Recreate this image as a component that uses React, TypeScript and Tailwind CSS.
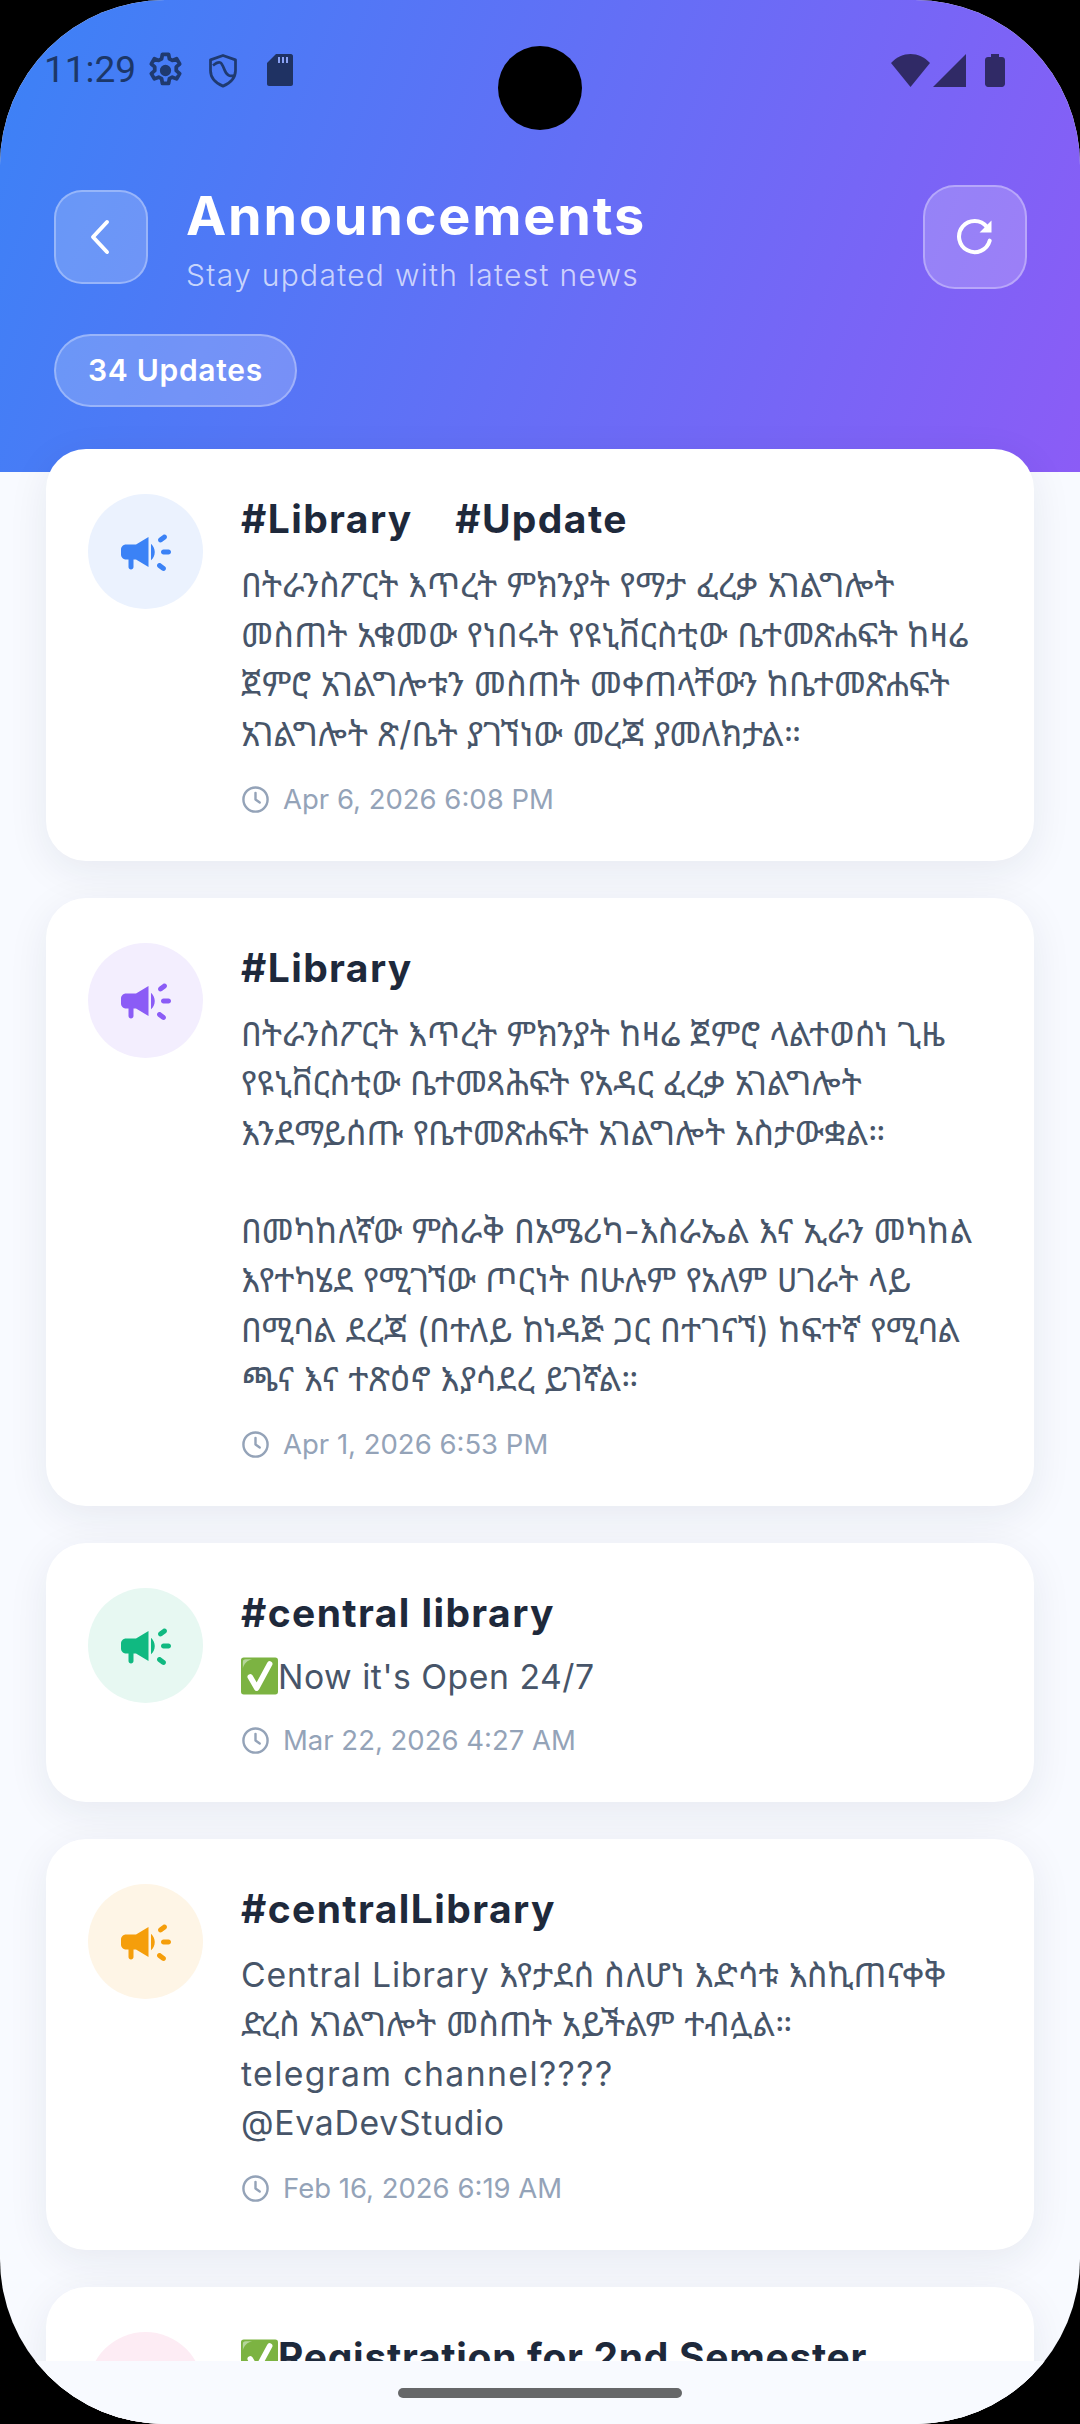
const FONT = "font-['Inter','Noto_Sans_Ethiopic','Noto_Sans',sans-serif]";

function Campaign({ className }: { className: string }) {
  return (
    <svg viewBox="0 0 24 24" fill="currentColor" className={className}>
      <path d="M18 12c0 .55.45 1 1 1h2c.55 0 1-.45 1-1s-.45-1-1-1h-2c-.55 0-1 .45-1 1zm-1.41 4.820c-.33.44-.24 1.050.2 1.370.53.39 1.090.81 1.620 1.210.44.33 1.060.24 1.380-.2.33-.44.24-1.060-.2-1.380-.53-.4-1.090-.82-1.620-1.200-.44-.33-1.050-.24-1.380.2zM20.200 5.380c-.33-.44-.95-.53-1.380-.2-.53.4-1.100.82-1.620 1.220-.44.33-.52.94-.2 1.380.33.44.94.53 1.380.2.53-.39 1.090-.82 1.620-1.220.44-.32.53-.94.2-1.380zM8 9H4c-1.100 0-2 .9-2 2v2c0 1.100.9 2 2 2h1v3c0 .55.45 1 1 1s1-.45 1-1v-3h1l5 3V6L8 9zm7.500 3c0-1.330-.58-2.530-1.500-3.350v6.690c.92-.81 1.500-2.010 1.500-3.340z" />
    </svg>
  );
}

function Clock() {
  return (
    <svg viewBox="0 0 24 24" fill="none" stroke="#94a3b8" strokeWidth="2" strokeLinecap="round" strokeLinejoin="round" className="w-[29px] h-[29px] shrink-0">
      <circle cx="12" cy="12" r="10" />
      <path d="M12 6.500V12l3.500 2.500" />
    </svg>
  );
}

function Check() {
  return (
    <svg viewBox="0 0 40 40" className="inline-block w-[37px] h-[40px] align-[-7px]">
      <rect x="0" y="0" width="40" height="40" rx="3" fill="#7cb342" />
      <path d="M2 12V5c0-2 1-3 3-3h7C7 3 3 7 2 12z" fill="#b5d69a" />
      <path d="M10 21l7 12L31 7" fill="none" stroke="#fff" strokeWidth="6" strokeLinecap="round" strokeLinejoin="round" />
    </svg>
  );
}

type CardProps = {
  tone: string;
  iconTone: string;
  title: React.ReactNode;
  body: React.ReactNode;
  date: string;
  bodyLeading?: string;
};

function Card({ tone, iconTone, title, body, date, bodyLeading = "leading-[49.250px]" }: CardProps) {
  return (
    <div className="bg-white rounded-[40px] pl-[42px] pr-[30px] pt-[42px] pb-[42px] flex gap-[38px] shadow-[0_10px_40px_rgba(30,41,59,0.08)]">
      <div className={`mt-[3px] w-[115px] h-[115px] rounded-full flex items-center justify-center shrink-0 ${tone}`}>
        <Campaign className={`w-[60px] h-[60px] ${iconTone}`} />
      </div>
      <div className="flex-1 min-w-0">
        <div className="text-[39px] leading-[56px] font-bold tracking-[1.400px] text-[#1e293b] whitespace-pre-wrap">{title}</div>
        <div className={`mt-[13px] text-[33.750px] text-[#475569] whitespace-pre-wrap ${bodyLeading}`}>{body}</div>
        <div className="mt-[21px] flex items-center gap-[13px] text-[27.500px] leading-[40px] text-[#94a3b8]">
          <Clock />
          <span>{date}</span>
        </div>
      </div>
    </div>
  );
}

export default function App() {
  return (
    <div className="w-[1080px] h-[2424px] bg-black overflow-hidden">
      <div className={`relative w-full h-full rounded-[165px] overflow-hidden bg-[#f8faff] ${FONT}`}>
        <div className="h-[472px] bg-[linear-gradient(110deg,#3b82f6,#8b5cf6)] flex flex-col">
          <div className="h-[140px] pl-[44px] pr-[75px] pt-[46px] flex justify-between items-start">
            <div className="flex items-center">
              <span className="text-[37px] leading-[48px] font-['Roboto',sans-serif] text-[#1c3768]">11:29</span>
              <svg viewBox="0 0 24 24" fill="none" stroke="#1f3a70" strokeWidth="2.200" className="ml-[9px] w-[41px] h-[41px]">
                <circle cx="12" cy="12" r="2.200" fill="#1f3a70" />
                <path d="M10.200 2.500h3.600l.5 2.700 1.700.9 2.500-1 1.800 3.100-2 1.700v2.200l2 1.700-1.800 3.100-2.500-1-1.700.9-.5 2.700h-3.600l-.5-2.700-1.700-.9-2.500 1-1.800-3.100 2-1.700V9.900l-2-1.700 1.800-3.100 2.500 1 1.700-.9z" strokeLinejoin="round" />
              </svg>
              <svg viewBox="0 0 24 28" fill="none" stroke="#1f3a70" strokeWidth="2.200" className="ml-[22px] w-[30px] h-[35px]">
                <path d="M12 2l10 3.500v8.500c0 5.500-4 10-10 12.500C6 24 2 19.500 2 14V5.500z" strokeLinejoin="round" />
                <path d="M4 10c6-5 7-2 9 3s4 6 8 5" />
              </svg>
              <svg viewBox="0 0 26 32" fill="#1f3263" className="ml-[29px] w-[26px] h-[32px]">
                <path d="M9 0h15c1 0 2 1 2 2v28c0 1-1 2-2 2H2c-1 0-2-1-2-2V9z" />
                <path d="M11 3h2v6h-2zM15 3h2v6h-2zM19 3h2v6h-2z" fill="#8aa2f5" />
              </svg>
            </div>
            <div className="flex items-center pt-[8px]">
              <svg viewBox="0 0 39 33" className="w-[39px] h-[33px]"><path d="M0 9C11-3 28-3 39 9L19.500 33z" fill="#302a66" /></svg>
              <svg viewBox="0 0 33 33" className="ml-[3px] w-[33px] h-[33px]"><path d="M33 0v33H0z" fill="#302a66" /></svg>
              <svg viewBox="0 0 20 33" className="ml-[19px] w-[20px] h-[33px]"><path d="M6 0h8v3h3c1.500 0 3 1.200 3 3v24c0 1.500-1.500 3-3 3H3c-1.500 0-3-1.500-3-3V6c0-1.800 1.500-3 3-3h3z" fill="#302a66" /></svg>
            </div>
          </div>
          <div className="mt-[45px] pl-[54px] pr-[53px] flex items-center gap-[38px]">
            <div className="w-[94px] h-[94px] rounded-[28px] bg-white/20 border-2 border-white/30 flex items-center justify-center">
              <svg viewBox="0 0 24 24" fill="none" stroke="#fff" strokeWidth="2" strokeLinecap="round" strokeLinejoin="round" className="w-[48px] h-[48px]"><path d="M15 4.500 8 12l7 7.500" /></svg>
            </div>
            <div className="flex-1">
              <div className="text-[54px] leading-[62px] font-bold tracking-[1.800px] text-white">Announcements</div>
              <div className="mt-[14px] text-[30px] leading-[28px] tracking-[1.300px] font-light text-white/70">Stay updated with latest news</div>
            </div>
            <div className="w-[104px] h-[104px] rounded-[32px] bg-white/20 border-2 border-white/30 flex items-center justify-center">
              <svg viewBox="0 0 24 24" fill="none" stroke="#fff" strokeWidth="2.200" strokeLinecap="round" className="w-[44px] h-[44px]">
                <path d="M20 14a8.500 8.500 0 1 1-1.500-7.500" />
                <path d="M21 3v6.500h-6.500z" fill="#fff" stroke="none" />
              </svg>
            </div>
          </div>
          <div className="mt-[45px] ml-[54px] self-start h-[73px] px-[32px] rounded-full bg-white/20 border-2 border-white/30 flex items-center text-[30px] font-semibold tracking-[0.700px] text-white">34 Updates</div>
        </div>

        <div className="absolute left-[46px] right-[46px] top-[449px] flex flex-col gap-[37px]">
          <Card
            tone="bg-[#ebf2fe]"
            iconTone="text-[#3b82f6]"
            title="#Library    #Update"
            bodyLeading="leading-[49.500px]"
            body={"በትራንስፖርት እጥረት ምክንያት የማታ ፈረቃ አገልግሎት\nመስጠት አቁመው የነበሩት የዩኒቨርስቲው ቤተመጽሐፍት ከዛሬ\nጀምሮ አገልግሎቱን መስጠት መቀጠላቸውን ከቤተመጽሐፍት\nአገልግሎት ጽ/ቤት ያገኘነው መረጃ ያመለክታል።"}
            date="Apr 6, 2026 6:08 PM"
          />
          <Card
            tone="bg-[#f3eefe]"
            iconTone="text-[#8b5cf6]"
            title="#Library"
            body={"በትራንስፖርት እጥረት ምክንያት ከዛሬ ጀምሮ ላልተወሰነ ጊዜ\nየዩኒቨርስቲው ቤተመጻሕፍት የአዳር ፈረቃ አገልግሎት\nእንደማይሰጡ የቤተመጽሐፍት አገልግሎት አስታውቋል።\n\nበመካከለኛው ምስራቅ በአሜሪካ-እስራኤል እና ኢራን መካከል\nእየተካሄደ የሚገኘው ጦርነት በሁሉም የአለም ሀገራት ላይ\nበሚባል ደረጃ (በተለይ ከነዳጅ ጋር በተገናኘ) ከፍተኛ የሚባል\nጫና እና ተጽዕኖ እያሳደረ ይገኛል።"}
            date="Apr 1, 2026 6:53 PM"
          />
          <Card
            tone="bg-[#e7f8f2]"
            iconTone="text-[#10b981]"
            title="#central library"
            bodyLeading="leading-[45px]"
            body={<><Check /><span className="tracking-[0.500px]">Now it's Open 24/7</span></>}
            date="Mar 22, 2026 4:27 AM"
          />
          <Card
            tone="bg-[#fef5e6]"
            iconTone="text-[#f59e0b]"
            title="#centralLibrary"
            body={<><span className="tracking-[0.800px]">Central Library</span>{" እየታደሰ ስለሆነ እድሳቱ እስኪጠናቀቅ\nድረስ አገልግሎት መስጠት አይችልም ተብሏል።\n"}<span className="tracking-[1.400px]">telegram channel????</span>{"\n"}<span className="tracking-[0.700px]">@EvaDevStudio</span></>}
            date="Feb 16, 2026 6:19 AM"
          />
          <Card
            tone="bg-[#fdecf4]"
            iconTone="text-[#ec4899]"
            title={<><Check /><span className="tracking-[0.700px]">Registration for 2nd Semester</span></>}
            body=""
            date=""
          />
        </div>

        <div className="absolute left-[498px] top-[46px] w-[84px] h-[84px] rounded-full bg-black" />
        <div className="absolute left-0 right-0 bottom-0 h-[63px] bg-[#f8faff] flex justify-center pt-[27px]">
          <div className="w-[284px] h-[10px] rounded-full bg-[#666769]" />
        </div>
      </div>
    </div>
  );
}
